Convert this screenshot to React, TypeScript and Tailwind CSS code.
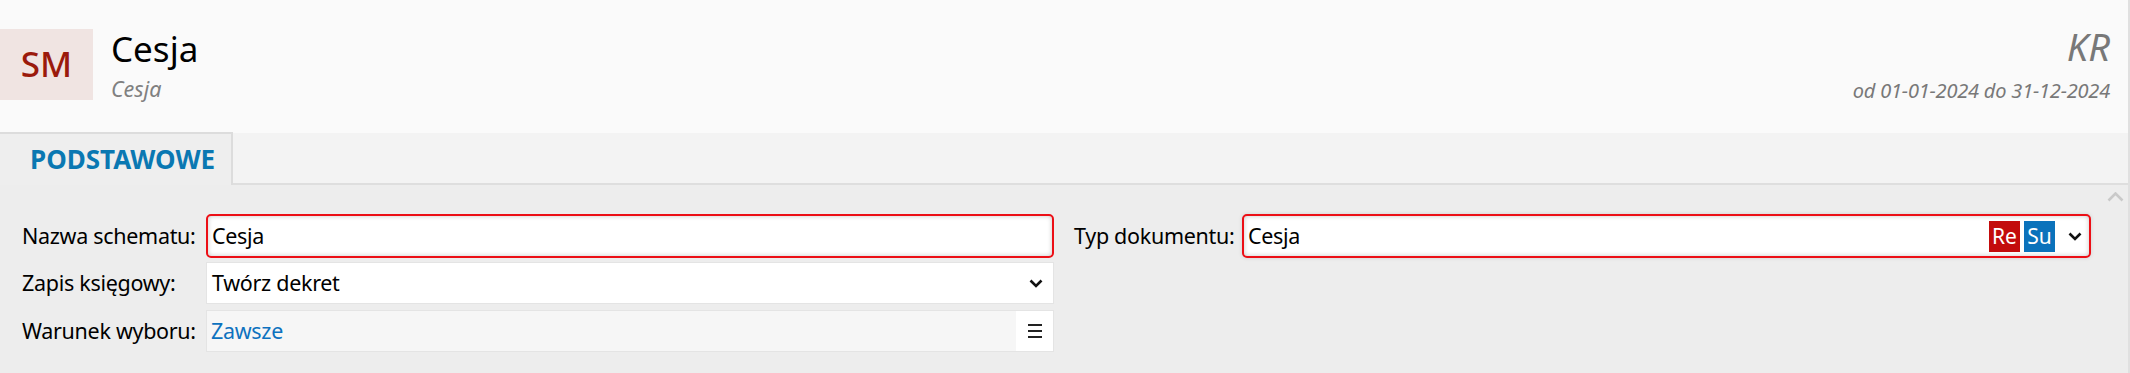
import React from "react";

const font = { fontFamily: '"Noto Sans", "Open Sans", sans-serif' };

const Chevron = () => (
  <svg width="14" height="9" viewBox="0 0 14 9" className="shrink-0">
    <polyline points="1.5,1.5 7,7 12.5,1.5" fill="none" stroke="#111" strokeWidth="2.6" />
  </svg>
);

const Burger = () => (
  <svg width="14" height="14" viewBox="0 0 14 14">
    <rect x="0" y="0" width="14" height="2" fill="#222" />
    <rect x="0" y="6" width="14" height="2" fill="#222" />
    <rect x="0" y="12" width="14" height="2" fill="#222" />
  </svg>
);

type Row_TP = {
  label: string;
  labelWidth: string;
  children: React.ReactNode;
  className?: string;
};

const Row = ({ label, labelWidth, children, className }: Row_TP) => (
  <div className={`flex items-center ${className ?? ""}`}>
    <div className={`${labelWidth} shrink-0 whitespace-nowrap text-[21.5px] tracking-[-0.3px] leading-[30px] text-black`}>
      {label}
    </div>
    {children}
  </div>
);

export default function App() {
  return (
    <div className="w-[2130px] h-[373px] flex flex-col bg-[#ededed] border-r-2 border-[#e0e0e0] overflow-hidden" style={font}>
      {/* header */}
      <div className="h-[133px] shrink-0 bg-[#fafafa] flex justify-between">
        <div className="flex pt-[29px]">
          <div className="w-[93px] h-[71px] bg-[#f0e4e2] flex items-center justify-center text-[35px] font-medium text-[#9b1a0c] leading-none pb-[2px]">
            SM
          </div>
          <div className="ml-[18px]">
            <div className="text-[35px] leading-[40px] text-black">Cesja</div>
            <div className="mt-[6px] text-[21.5px] leading-[28px] italic text-[#808080]">Cesja</div>
          </div>
        </div>
        <div className="pt-[24px] pr-[18px] flex flex-col items-end">
          <div className="text-[38px] leading-[44px] italic text-[#787878]">KR</div>
          <div className="mt-[9px] text-[20px] tracking-[-0.2px] leading-[28px] italic text-[#787878]">
            od 01-01-2024 do 31-12-2024
          </div>
        </div>
      </div>

      {/* tabs */}
      <div className="h-[52px] shrink-0 bg-[#f3f3f3] flex items-end border-b-2 border-[#dedede]">
        <div className="w-[233px] h-[53px] -mb-[2px] bg-[#eeeeee] border-t-2 border-r-2 border-[#dcdcdc] flex items-center pl-[30px] text-[26px] font-bold text-[#0a78b2]">
          PODSTAWOWE
        </div>
      </div>

      {/* content */}
      <div className="flex-1 relative pt-[29px] pl-[22px] flex gap-[20px]">
        <div className="w-[1032px] flex flex-col">
          <Row label="Nazwa schematu:" labelWidth="w-[184px]">
            <div className="flex-1 h-[44px] rounded-[5px] border-2 border-[#ec0f16] bg-white shadow-[inset_0_0_5px_rgba(0,0,0,0.22)] flex items-center px-[4px] text-[21.5px] tracking-[-0.3px] text-black">
              Cesja
            </div>
          </Row>
          <Row label="Zapis księgowy:" labelWidth="w-[184px]" className="mt-[4px]">
            <div className="flex-1 h-[42px] border border-[#e4e4e4] bg-white flex items-center justify-between pl-[5px] pr-[10px] text-[21.5px] tracking-[-0.3px] text-black">
              <span>Twórz dekret</span>
              <Chevron />
            </div>
          </Row>
          <Row label="Warunek wyboru:" labelWidth="w-[184px]" className="mt-[6px]">
            <div className="flex-1 h-[42px] border border-[#e4e4e4] bg-[#f6f6f6] flex items-center text-[21.5px] tracking-[-0.3px]">
              <span className="flex-1 pl-[4px] text-[#0d72bf]">Zawsze</span>
              <div className="w-[37px] h-full bg-white flex items-center justify-center">
                <Burger />
              </div>
            </div>
          </Row>
        </div>

        <div className="w-[1017px] flex flex-col">
          <Row label="Typ dokumentu:" labelWidth="w-[168px]">
            <div className="flex-1 h-[44px] rounded-[5px] border-2 border-[#ec0f16] bg-white shadow-[inset_0_0_5px_rgba(0,0,0,0.22),0_0_4px_rgba(0,0,0,0.12)] flex items-center pl-[4px] pr-[7px] text-[21.5px] tracking-[-0.3px] text-black">
              <span className="flex-1">Cesja</span>
              <div className="w-[31px] h-[31px] bg-[#c30c0c] text-white text-[21px] tracking-normal flex items-center justify-center leading-none">Re</div>
              <div className="ml-[4px] w-[31px] h-[31px] bg-[#0b72bb] text-white text-[21px] tracking-normal flex items-center justify-center leading-none">Su</div>
              <div className="ml-[13px]">
                <Chevron />
              </div>
            </div>
          </Row>
        </div>

        <svg width="17" height="10" viewBox="0 0 17 10" className="absolute right-[4px] top-[7px]">
          <polyline points="1.5,8.5 8.5,1.5 15.5,8.5" fill="none" stroke="#c9c9c9" strokeWidth="2.6" />
        </svg>
      </div>
    </div>
  );
}
